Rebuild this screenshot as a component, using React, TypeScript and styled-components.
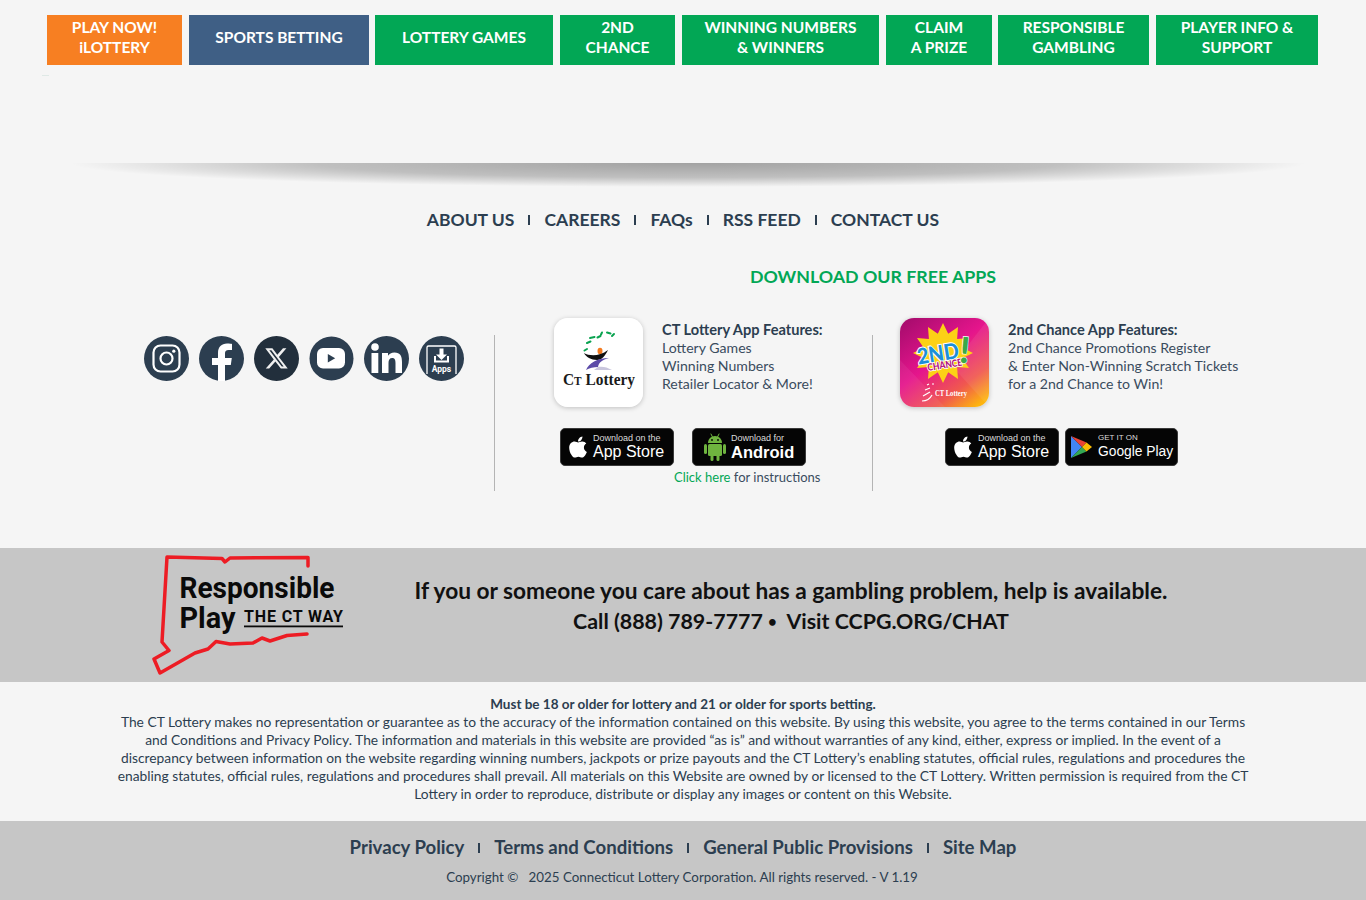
import React from 'react';
import styled, { createGlobalStyle } from 'styled-components';
import { FaApple } from 'react-icons/fa6';

const GlobalStyle = createGlobalStyle`
  html, body {
    margin: 0;
    padding: 0;
    background: #f5f5f5;
    font-family: Lato, "Open Sans", sans-serif;
    color: #2c3e50;
  }
  * { box-sizing: border-box; }
`;

const Page = styled.div`
  width: 1366px;
  height: 900px;
  overflow: hidden;
`;

const MainNav = styled.nav`
  display: flex;
  height: 65px;
  padding: 15px 0 0 47px;
`;

const NavItem = styled.a<{ $width: number; $gap: number; $bg?: string }>`
  display: flex;
  align-items: center;
  justify-content: center;
  text-align: center;
  width: ${p => p.$width}px;
  margin-right: ${p => p.$gap}px;
  height: 50px;
  padding-bottom: 7px;
  background: ${p => p.$bg || '#02a755'};
  color: #fff;
  font-size: 15.5px;
  font-weight: 700;
  line-height: 20px;
`;

const StrayDash = styled.div`
  width: 7px;
  height: 1px;
  margin: 10px 0 0 42px;
  background: #dfe9e6;
`;

const ShadowBar = styled.div`
  margin: 87px 60px 0 70px;
  height: 24px;
  background: radial-gradient(ellipse 50% 100% at 50% 0, rgba(0, 0, 0, 0.34) 0%, rgba(0, 0, 0, 0.22) 60%, rgba(0, 0, 0, 0) 100%);
`;

const FooterLinks = styled.div`
  display: flex;
  justify-content: center;
  align-items: center;
  height: 24px;
  margin-top: 20px;
  font-size: 17.5px;
  font-weight: 700;
`;

const Sep = styled.span`
  width: 2px;
  height: 10px;
  margin: 1px 14px 0;
  background: #2c3e50;
`;

const AppsSection = styled.section`
  display: flex;
  margin-top: 34px;
  height: 283px;
`;

const SocialCol = styled.div`
  width: 495px;
  height: 156px;
  margin-top: 70px;
  border-right: 1px solid #b4b4b4;
  padding: 1px 30px 0 0;
  display: flex;
  justify-content: flex-end;
  gap: 10px;
`;

const SocialIcon = styled.svg`
  width: 45px;
  height: 45px;
  display: block;
`;

const AppsCol = styled.div`
  width: 756px;
`;

const AppsHeading = styled.h3`
  margin: 0;
  height: 22px;
  line-height: 22px;
  text-align: center;
  color: #02a755;
  font-size: 17.8px;
  font-weight: 700;
`;

const AppsRow = styled.div`
  display: flex;
  margin-top: 31px;
`;

const AppCard = styled.div<{ $first?: boolean }>`
  position: relative;
  width: 378px;
  height: 174px;
  padding-left: ${p => (p.$first ? 59 : 27)}px;
  ${p => p.$first && `
    &::after {
      content: '';
      position: absolute;
      right: 0;
      top: 17px;
      height: 156px;
      width: 1px;
      background: #b4b4b4;
    }
  `}
`;

const AppTop = styled.div`
  display: flex;
  gap: 19px;
`;

const AppIcon = styled.svg`
  width: 89px;
  height: 89px;
  flex: none;
  border-radius: 14px;
  box-shadow: 0 1px 5px rgba(0, 0, 0, 0.22);
`;

const Features = styled.div`
  padding-top: 4px;
  font-size: 14.1px;
  line-height: 18px;
  white-space: nowrap;
  color: #3a4c5e;
`;

const FeatureTitle = styled.div`
  font-size: 14.6px;
  line-height: 16.5px;
  font-weight: 700;
  color: #2c3e50;
`;

const Badges = styled.div<{ $left: number; $gap: number }>`
  display: flex;
  gap: ${p => p.$gap}px;
  margin: 21px 0 0 ${p => p.$left}px;
`;

const Badge = styled.a<{ $width: number; $pad: number; $gap: number }>`
  display: flex;
  align-items: center;
  gap: ${p => p.$gap}px;
  width: ${p => p.$width}px;
  height: 38px;
  padding-left: ${p => p.$pad}px;
  border-radius: 5px;
  background: #050505;
  border: 1px solid #3a3a3a;
  color: #fff;
  font-family: "Liberation Sans", sans-serif;
  white-space: nowrap;
`;

const BadgeText = styled.div`
  display: flex;
  flex-direction: column;
`;

const BadgeSmall = styled.span<{ $size?: number }>`
  font-size: ${p => p.$size || 9}px;
  line-height: 10px;
  color: #dcdcdc;
`;

const BadgeBig = styled.span<{ $bold?: boolean; $size?: number }>`
  font-size: ${p => p.$size || 16}px;
  line-height: 18px;
  font-weight: ${p => (p.$bold ? 700 : 400)};
`;

const Instructions = styled.div`
  margin: 3px 0 0 120px;
  font-size: 13px;
  line-height: 17px;
  color: #3a4c5e;
`;

const GreenLink = styled.a`
  color: #02a755;
`;

const HelpBand = styled.section`
  display: flex;
  height: 134px;
  background: #c6c6c6;
  padding-left: 140px;
`;

const HelpLogo = styled.svg`
  width: 220px;
  height: 134px;
  flex: none;
`;

const HelpText = styled.div`
  width: 862px;
  padding-top: 28px;
  text-align: center;
  color: #111;
  font-weight: 700;
`;

const HelpLine = styled.div<{ $size: number }>`
  font-size: ${p => p.$size}px;
  line-height: 30px;
  white-space: nowrap;
`;

const Bullet = styled.span`
  font-size: 15px;
  vertical-align: 2px;
`;

const Legal = styled.section`
  height: 139px;
  padding-top: 13px;
  text-align: center;
  font-size: 13.8px;
  line-height: 18px;
  color: #2c3e50;
`;

const LegalStrong = styled.div`
  font-size: 13.5px;
  font-weight: 700;
`;

const BottomBand = styled.footer`
  height: 79px;
  background: #c6c6c6;
  padding-top: 14px;
`;

const BottomLinks = styled.div`
  display: flex;
  justify-content: center;
  align-items: center;
  height: 24px;
  font-size: 18.6px;
  font-weight: 700;
`;

const Copyright = styled.div`
  margin-top: 9px;
  margin-right: 2px;
  text-align: center;
  font-size: 13.35px;
  line-height: 18px;
`;

const navItems = [
  { label: ['PLAY NOW!', 'iLOTTERY'], width: 135, gap: 7, bg: '#f77f22' },
  { label: ['SPORTS BETTING'], width: 180, gap: 6, bg: '#3f5f85' },
  { label: ['LOTTERY GAMES'], width: 178, gap: 7 },
  { label: ['2ND', 'CHANCE'], width: 115, gap: 7 },
  { label: ['WINNING NUMBERS', '& WINNERS'], width: 197, gap: 7 },
  { label: ['CLAIM', 'A PRIZE'], width: 106, gap: 6 },
  { label: ['RESPONSIBLE', 'GAMBLING'], width: 151, gap: 7 },
  { label: ['PLAYER INFO &', 'SUPPORT'], width: 162, gap: 0 },
];

const footerLinks = ['ABOUT US', 'CAREERS', 'FAQs', 'RSS FEED', 'CONTACT US'];
const bottomLinks = ['Privacy Policy', 'Terms and Conditions', 'General Public Provisions', 'Site Map'];

const dark = '#2c3e50';

const Instagram = () => (
  <SocialIcon viewBox="0 0 45 45">
    <circle cx="22.5" cy="22.5" r="22.5" fill={dark} />
    <rect x="9.5" y="9.5" width="26" height="26" rx="7" fill="none" stroke="#fff" strokeWidth="2.2" />
    <circle cx="22.5" cy="22.5" r="6" fill="none" stroke="#fff" strokeWidth="2.2" />
    <circle cx="29.8" cy="15.2" r="1.6" fill="#fff" />
  </SocialIcon>
);

const Facebook = () => (
  <SocialIcon viewBox="0 0 45 45">
    <circle cx="22.5" cy="22.5" r="22.5" fill={dark} />
    <path d="M19 45V29h-6v-7h6v-5c0-6 3.600-9.400 9-9.400 2.600 0 4.600.3 5 .4v6h-3.400c-2.800 0-3.600 1.500-3.600 3.400V22h6.800l-1 7H26v16z" fill="#fff" />
  </SocialIcon>
);

const XIcon = () => (
  <SocialIcon viewBox="0 0 45 45">
    <circle cx="22.5" cy="22.5" r="22.5" fill="#222f3c" />
    <path
      transform="translate(10 10) scale(1.04)"
      d="M18.244 2.25h3.308l-7.227 8.26 8.502 11.24H16.17l-5.214-6.817L4.99 21.75H1.68l7.73-8.835L1.254 2.25H8.08l4.713 6.231zm-1.161 17.52h1.833L7.084 4.126H5.117z"
      fill="#f0f0f0"
    />
  </SocialIcon>
);

const Youtube = () => (
  <SocialIcon viewBox="0 0 45 45">
    <circle cx="22.5" cy="22.5" r="22" fill={dark} />
    <rect x="8" y="12" width="28" height="20.500" rx="6" fill="#fff" />
    <path d="M18.800 18l7.400 4.200-7.400 4.200z" fill={dark} />
  </SocialIcon>
);

const Linkedin = () => (
  <SocialIcon viewBox="0 0 45 45">
    <circle cx="22.5" cy="22.5" r="22.5" fill={dark} />
    <circle cx="11" cy="11" r="3.800" fill="#fff" />
    <rect x="7.500" y="17" width="6.800" height="20" fill="#fff" />
    <path d="M18 17h6v2.800c1.200-2 3.400-3.300 6.400-3.300 6 0 7.600 3.800 7.600 9.400V37h-6.500V27c0-2.800-.6-5-3.200-5-2.800 0-3.800 2-3.800 5v10H18z" fill="#fff" />
  </SocialIcon>
);

const AppsIcon = () => (
  <SocialIcon viewBox="0 0 45 45">
    <circle cx="22.5" cy="22.5" r="22.5" fill={dark} />
    <path d="M8 38V11.500q0-1.500 1.500-1.500h26q1.500 0 1.500 1.500V38" fill="none" stroke="#fff" strokeWidth="1.300" />
    <path d="M20.500 12.500h4v6h3.500l-5.500 5.500-5.500-5.500h3.500z" fill="#fff" />
    <path d="M15 20v6.500h15V20h-2v4.500H17V20z" fill="#fff" />
    <text x="22.500" y="36" textAnchor="middle" fontFamily="Roboto, sans-serif" fontSize="8.500" fontWeight="700" fill="#fff">Apps</text>
  </SocialIcon>
);

const CtLotteryIcon = () => (
  <AppIcon viewBox="0 0 89 89">
    <rect width="89" height="89" fill="#fff" />
    <path
      d="M30.500 32.500l2.500-1.500M33 25l3.500-1.500M36 20l4.500-1M43.500 19.500l3-1.500M47 16.500l1-2M53 14.500l3.500 1M58 18l2-2"
      stroke="#0aa350"
      strokeWidth="2"
      strokeLinecap="round"
      fill="none"
    />
    <ellipse cx="46" cy="33" rx="2.500" ry="3.200" fill="#f47b20" />
    <path d="M30 35c5 3 15 4 24-3-3 6-6 10-11 10-6 0-11-3-13-7z" fill="#111" />
    <path d="M32 52c3-7 11-12 23-12-7 2-10 4-11 9-4 0-9 1-12 3z" fill="#5b4aa8" />
    <path d="M44 49c4-1 9 0 14 3H40z" fill="#c9c6dd" />
    <text x="9" y="67" fontFamily="'Liberation Serif', serif" fontSize="17" fontWeight="700" fill="#1a1a1a" textLength="72" lengthAdjust="spacingAndGlyphs">
      C<tspan fontSize="12.500">T</tspan> Lottery
    </text>
  </AppIcon>
);

const starPoints = (cx: number, cy: number, n: number, r1: number, r2: number) =>
  Array.from({ length: n * 2 }, (_, i) => {
    const a = (Math.PI * i) / n - Math.PI / 2;
    const r = i % 2 ? r2 : r1;
    return `${(cx + r * Math.cos(a)).toFixed(1)},${(cy + r * Math.sin(a)).toFixed(1)}`;
  }).join(' ');

const ChanceIcon = () => (
  <AppIcon viewBox="0 0 89 89">
    <defs>
      <linearGradient id="chanceBg" x1="0.1" y1="0" x2="0.85" y2="1">
        <stop offset="0" stopColor="#a80c6e" />
        <stop offset="0.45" stopColor="#e5158c" />
        <stop offset="0.78" stopColor="#f0584f" />
        <stop offset="1" stopColor="#fdb40f" />
      </linearGradient>
    </defs>
    <rect width="89" height="89" fill="url(#chanceBg)" />
    <path d="M89 0L52 48 89 89z" fill="#fff" opacity="0.07" />
    <path d="M0 42L45 89H0z" fill="#fff" opacity="0.06" />
    <polygon points={starPoints(43, 35, 12, 30, 20)} fill="#fcd116" />
    <g transform="rotate(-9 40 42)">
      <text x="39" y="43" textAnchor="middle" fontFamily="Lato, sans-serif" fontSize="22" fontWeight="900" fill="#1d8fd8" stroke="#fff" strokeWidth="2" paintOrder="stroke" textLength="42" lengthAdjust="spacingAndGlyphs">2ND</text>
      <text x="44" y="51" textAnchor="middle" fontFamily="Lato, sans-serif" fontSize="10" fontWeight="900" fill="#b3127e" stroke="#fff" strokeWidth="1.600" paintOrder="stroke" textLength="35" lengthAdjust="spacingAndGlyphs">CHANCE</text>
    </g>
    <text x="65" y="45" textAnchor="middle" fontFamily="Lato, sans-serif" fontSize="36" fontWeight="900" fill="#3aa948" stroke="#fff" strokeWidth="1.200" paintOrder="stroke" transform="rotate(5 65 30)">!</text>
    <text x="35" y="78" fontFamily="'Liberation Serif', serif" fontSize="8" fontWeight="700" fill="#fff" textLength="32" lengthAdjust="spacingAndGlyphs">CT Lottery</text>
    <path d="M22 83c4 0 8-2 10-6M23 78l7-4M25 72l5-2M27 67l2-1M32 66l2 0" fill="none" stroke="#fff" strokeWidth="1.200" />
  </AppIcon>
);

const AndroidIcon = () => (
  <svg width="22" height="28" viewBox="0 0 22 28">
    <path d="M7 1l1.500 3M15 1l-1.500 3" stroke="#6fb43f" strokeWidth="1" strokeLinecap="round" />
    <path d="M4 10c0-4 3-7 7-7s7 3 7 7z" fill="#6fb43f" />
    <rect x="4" y="11" width="14" height="12" rx="1.500" fill="#6fb43f" />
    <rect x="0" y="11" width="3" height="10" rx="1.500" fill="#6fb43f" />
    <rect x="19" y="11" width="3" height="10" rx="1.500" fill="#6fb43f" />
    <rect x="6.500" y="21" width="3" height="7" rx="1.500" fill="#6fb43f" />
    <rect x="12.500" y="21" width="3" height="7" rx="1.500" fill="#6fb43f" />
    <circle cx="8" cy="7" r="0.900" fill="#050505" />
    <circle cx="14" cy="7" r="0.900" fill="#050505" />
  </svg>
);

const PlayIcon = () => (
  <svg width="21" height="24" viewBox="0 0 21 24">
    <path d="M0 1v22l11-11z" fill="#4285f4" />
    <path d="M0 1l11 11 4.500-4.500z" fill="#ea4335" />
    <path d="M0 23l11-11 4.500 4.500z" fill="#34a853" />
    <path d="M15.500 7.500L21 12l-5.500 4.500L11 12z" fill="#fbbc04" />
  </svg>
);

const ResponsibleLogo = () => (
  <HelpLogo viewBox="0 3 220 134">
    <path
      d="M168 21V12.500L90 13 85 17 82 13.500 27 12 22 97 29 105.500 14 114 20 128 55 108 68 104 76 96.500 90 99 113 98 122 93 130 96 147 90.500 167 89"
      fill="none"
      stroke="#ed1c24"
      strokeWidth="3.500"
      strokeLinejoin="round"
      strokeLinecap="round"
    />
    <text x="39.500" y="53" fontFamily="Roboto, sans-serif" fontSize="30" fontWeight="700" fill="#0a0a0a" textLength="155" lengthAdjust="spacingAndGlyphs">Responsible</text>
    <text x="39.500" y="82.500" fontFamily="Roboto, sans-serif" fontSize="30" fontWeight="700" fill="#0a0a0a" textLength="56" lengthAdjust="spacingAndGlyphs">Play</text>
    <text x="104" y="77" fontFamily="Roboto, sans-serif" fontSize="16" fontWeight="700" fill="#0a0a0a" textLength="99" lengthAdjust="spacing">THE CT WAY</text>
    <rect x="104" y="80.500" width="99" height="1.800" fill="#0a0a0a" />
  </HelpLogo>
);

export default function App() {
  return (
    <Page>
      <GlobalStyle />
      <MainNav>
        {navItems.map(item => (
          <NavItem key={item.label[0]} $width={item.width} $gap={item.gap} $bg={item.bg}>
            <span>
              {item.label.map((line, i) => (
                <React.Fragment key={line}>
                  {i > 0 && <br />}
                  {line}
                </React.Fragment>
              ))}
            </span>
          </NavItem>
        ))}
      </MainNav>
      <StrayDash />
      <ShadowBar />
      <FooterLinks>
        {footerLinks.map((link, i) => (
          <React.Fragment key={link}>
            {i > 0 && <Sep />}
            <a>{link}</a>
          </React.Fragment>
        ))}
      </FooterLinks>
      <AppsSection>
        <SocialCol>
          <Instagram />
          <Facebook />
          <XIcon />
          <Youtube />
          <Linkedin />
          <AppsIcon />
        </SocialCol>
        <AppsCol>
          <AppsHeading>DOWNLOAD OUR FREE APPS</AppsHeading>
          <AppsRow>
            <AppCard $first>
              <AppTop>
                <CtLotteryIcon />
                <Features>
                  <FeatureTitle>CT Lottery App Features:</FeatureTitle>
                  Lottery Games<br />
                  Winning Numbers<br />
                  Retailer Locator &amp; More!
                </Features>
              </AppTop>
              <Badges $left={6} $gap={18}>
                <Badge $width={114} $pad={5} $gap={3}>
                  <FaApple size={24} />
                  <BadgeText>
                    <BadgeSmall>Download on the</BadgeSmall>
                    <BadgeBig>App Store</BadgeBig>
                  </BadgeText>
                </Badge>
                <Badge $width={114} $pad={11} $gap={5}>
                  <AndroidIcon />
                  <BadgeText>
                    <BadgeSmall>Download for</BadgeSmall>
                    <BadgeBig $bold $size={16.5}>Android</BadgeBig>
                  </BadgeText>
                </Badge>
              </Badges>
              <Instructions>
                <GreenLink>Click here</GreenLink> for instructions
              </Instructions>
            </AppCard>
            <AppCard>
              <AppTop>
                <ChanceIcon />
                <Features>
                  <FeatureTitle>2nd Chance App Features:</FeatureTitle>
                  2nd Chance Promotions Register<br />
                  &amp; Enter Non-Winning Scratch Tickets<br />
                  for a 2nd Chance to Win!
                </Features>
              </AppTop>
              <Badges $left={45} $gap={6}>
                <Badge $width={114} $pad={5} $gap={3}>
                  <FaApple size={24} />
                  <BadgeText>
                    <BadgeSmall>Download on the</BadgeSmall>
                    <BadgeBig>App Store</BadgeBig>
                  </BadgeText>
                </Badge>
                <Badge $width={113} $pad={5} $gap={6}>
                  <PlayIcon />
                  <BadgeText>
                    <BadgeSmall $size={8}>GET IT ON</BadgeSmall>
                    <BadgeBig $size={13.8}>Google Play</BadgeBig>
                  </BadgeText>
                </Badge>
              </Badges>
            </AppCard>
          </AppsRow>
        </AppsCol>
      </AppsSection>
      <HelpBand>
        <ResponsibleLogo />
        <HelpText>
          <HelpLine $size={22.7}>If you or someone you care about has a gambling problem, help is available.</HelpLine>
          <HelpLine $size={21.4}>Call (888) 789-7777 <Bullet>•</Bullet>&nbsp; Visit CCPG.ORG/CHAT</HelpLine>
        </HelpText>
      </HelpBand>
      <Legal>
        <LegalStrong>Must be 18 or older for lottery and 21 or older for sports betting.</LegalStrong>
        The CT Lottery makes no representation or guarantee as to the accuracy of the information contained on this website. By using this website, you agree to the terms contained in our Terms<br />
        and Conditions and Privacy Policy. The information and materials in this website are provided “as is” and without warranties of any kind, either, express or implied. In the event of a<br />
        discrepancy between information on the website regarding winning numbers, jackpots or prize payouts and the CT Lottery’s enabling statutes, official rules, regulations and procedures the<br />
        enabling statutes, official rules, regulations and procedures shall prevail. All materials on this Website are owned by or licensed to the CT Lottery. Written permission is required from the CT<br />
        Lottery in order to reproduce, distribute or display any images or content on this Website.
      </Legal>
      <BottomBand>
        <BottomLinks>
          {bottomLinks.map((link, i) => (
            <React.Fragment key={link}>
              {i > 0 && <Sep />}
              <a>{link}</a>
            </React.Fragment>
          ))}
        </BottomLinks>
        <Copyright>Copyright ©&nbsp;&nbsp; 2025 Connecticut Lottery Corporation. All rights reserved. - V 1.19</Copyright>
      </BottomBand>
    </Page>
  );
}
